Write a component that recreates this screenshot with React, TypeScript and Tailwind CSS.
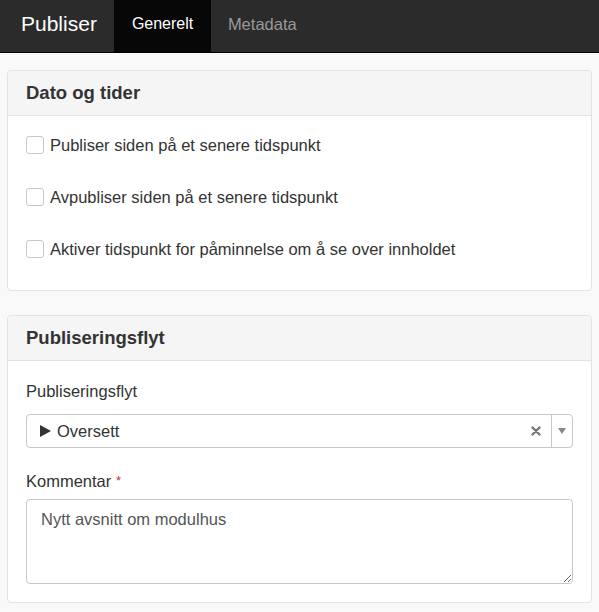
import React from 'react';

const font = { fontFamily: '"Liberation Sans", Arial, sans-serif' };

const checks = [
  'Publiser siden på et senere tidspunkt',
  'Avpubliser siden på et senere tidspunkt',
  'Aktiver tidspunkt for påminnelse om å se over innholdet',
];

const Panel: React.FC<{ title: string; children: React.ReactNode; className?: string }> = ({ title, children, className }) => (
  <div className={`mx-[7px] rounded-[4px] border border-[#e3e3e3] bg-white ${className || ''}`}>
    <div className="h-[45px] px-[18px] flex items-center bg-[#f5f5f5] border-b border-[#e3e3e3] rounded-t-[4px]">
      <h3 className="text-[18.5px] font-bold text-[#333]">{title}</h3>
    </div>
    {children}
  </div>
);

export default function App() {
  return (
    <div className="h-[612px] bg-[#f9f9f9] text-[#333]" style={font}>
      {/* top bar */}
      <div className="h-[53px] bg-[#2b2b2b] border-b border-black flex items-stretch">
        <div className="pl-[21px] pr-[17px] pb-[4px] flex items-center text-white text-[21px]">Publiser</div>
        <div className="w-[97px] bg-[#070707] pb-[4px] flex items-center px-[18px] text-white text-[16px]">Generelt</div>
        <div className="flex items-center px-[17px] pb-[4px] text-[#999] text-[16.5px]">Metadata</div>
      </div>

      <Panel title="Dato og tider" className="mt-[17px]">
        <div className="px-[18px] pt-[20px] pb-[32px] flex flex-col gap-[34px]">
          {checks.map((c) => (
            <label key={c} className="flex items-center gap-[6px] h-[18px] text-[16.5px] text-[#333]">
              <span className="w-[18px] h-[18px] rounded-[3px] border border-[#c8c8c8] bg-white shrink-0" />
              {c}
            </label>
          ))}
        </div>
      </Panel>

      <Panel title="Publiseringsflyt" className="mt-[24px]">
        <div className="px-[18px] pt-[20px] pb-[18px]">
          <div className="text-[16.5px] leading-[20px] mb-[13px]">Publiseringsflyt</div>
          <div className="h-[34px] rounded-[4px] border border-[#c8c8c8] bg-white flex items-center text-[16.5px] text-[#333]">
            <div className="flex-1 pl-[13px] flex items-center gap-[6px]">
              <svg width="11" height="12" viewBox="0 0 11 12">
                <path d="M0 0 L11 6 L0 12 Z" fill="#333" />
              </svg>
              <span>Oversett</span>
            </div>
            <svg width="10" height="10" viewBox="0 0 10 10" className="mr-[10px]">
              <path d="M1.5 1.5 L8.5 8.5 M8.5 1.5 L1.5 8.5" stroke="#777" strokeWidth="2.4" strokeLinecap="round" />
            </svg>
            <div className="w-[21px] h-full border-l border-[#c8c8c8] flex items-center justify-center">
              <svg width="8" height="6" viewBox="0 0 8 6">
                <path d="M0 0 L8 0 L4 6 Z" fill="#888" />
              </svg>
            </div>
          </div>
          <div className="mt-[23px] mb-[8px] text-[16.5px] leading-[20px]">
            Kommentar <span className="text-[#c9302c] text-[13px] align-top">*</span>
          </div>
          <textarea
            defaultValue="Nytt avsnitt om modulhus"
            className="block w-full h-[85px] rounded-[4px] border border-[#c8c8c8] bg-white px-[14px] py-[9px] text-[16.5px] leading-[20px] text-[#555] outline-none"
            style={font}
          />
        </div>
      </Panel>
    </div>
  );
}
